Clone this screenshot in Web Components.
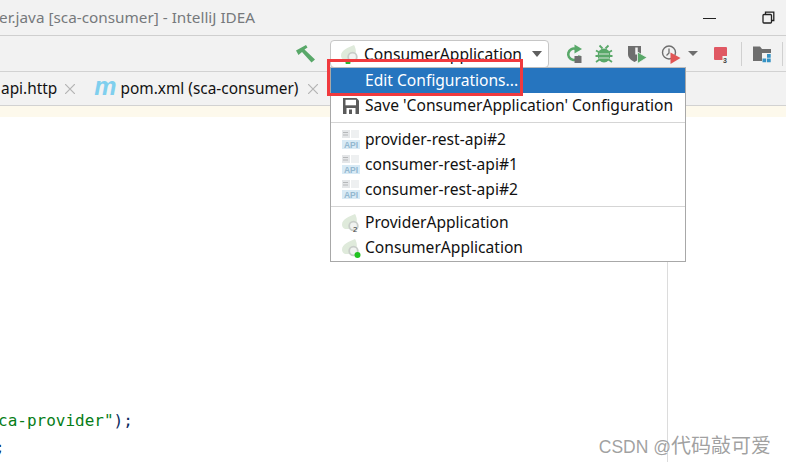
<!DOCTYPE html>
<html><head><meta charset="utf-8">
<style>
html,body{margin:0;padding:0;width:786px;height:462px;overflow:hidden;background:#fff}
body{font-family:"Noto Sans","Open Sans",sans-serif;font-size:15px;color:#111}
</style></head><body>
<ide-window>
  <title-bar>er.java [sca-consumer] - IntelliJ IDEA</title-bar>
  <tool-bar></tool-bar>
  <tab-bar></tab-bar>
  <editor-pane></editor-pane>
  <run-menu>
    <menu-item selected>Edit Configurations...</menu-item>
    <menu-item icon="save">Save 'ConsumerApplication' Configuration</menu-item>
    <menu-sep></menu-sep>
    <menu-item icon="api">provider-rest-api#2</menu-item>
    <menu-item icon="api">consumer-rest-api#1</menu-item>
    <menu-item icon="api">consumer-rest-api#2</menu-item>
    <menu-sep tight></menu-sep>
    <menu-item icon="spring2">ProviderApplication</menu-item>
    <menu-item icon="springrun">ConsumerApplication</menu-item>
  </run-menu>
  <red-mark></red-mark>
  <water-mark></water-mark>
</ide-window>
<script>
const FONT='"Noto Sans","Open Sans",sans-serif';
const spring=(extra='')=>`<svg width="20" height="20" viewBox="0 0 20 20"><path d="M1 11.500C1 6 8 3.500 14 1c2.500 4 2.500 9 0 12l-2 3H4C2 15 1 13.500 1 11.500z" fill="#dfeadb"/><circle cx="12.500" cy="13" r="4.300" fill="#f1f3f1" stroke="#c8cdc9" stroke-width="1.800"/>${extra}</svg>`;
function def(name,html){
  customElements.define(name,class extends HTMLElement{
    connectedCallback(){
      if(this.shadowRoot)return;
      this.attachShadow({mode:'open'}).innerHTML=html;
    }
  });
}
def('ide-window',`<style>:host{display:flex;flex-direction:column;width:786px;height:462px;position:relative;overflow:hidden;background:#fff}</style><slot></slot>`);
def('title-bar',`<style>
:host{display:flex;align-items:center;justify-content:space-between;height:35px;background:#f2f2f2;border-bottom:1px solid #cfcfcf;color:#76797c;font:15.300px ${FONT};flex:none}
.t{margin-left:-1px;white-space:nowrap;padding-bottom:1px}
.w{display:flex;align-items:center;gap:45px;margin-right:11px}
svg{display:block}
</style><span class="t"><slot></slot></span><span class="w">
<svg width="14" height="12" viewBox="0 0 14 12"><rect x="0" y="6" width="13" height="1" fill="#222"/></svg>
<svg width="13" height="13" viewBox="0 0 13 13" fill="none" stroke="#222" stroke-width="1.300"><rect x="1" y="3.500" width="8.500" height="8.500" rx="1"/><path d="M3.500 3V1.200h8.300v8.300H10"/></svg>
</span>`);
def('tool-bar',`<style>
:host{display:flex;align-items:center;height:35px;background:#f2f2f2;border-bottom:1px solid #d2d2d2;flex:none;padding-left:295px}
svg{display:block;flex:none}
.combo{margin-left:15px;width:219px;height:28px;box-sizing:border-box;border:1px solid #c6c6c6;border-radius:4px;background:#fff;display:flex;align-items:center;padding-left:9px;font:15.600px ${FONT};color:#111;margin-top:1px}
.combo span{margin-left:4px;white-space:nowrap;padding-bottom:1px}
.arrow{width:0;height:0;border:5.500px solid transparent;border-top:6px solid #5f5f5f;border-bottom:0;margin-left:auto;margin-right:6px}
.sep{width:1px;height:24px;background:#d0d0d0;flex:none}
.a{width:0;height:0;border:5px solid transparent;border-top:5px solid #6e6e6e;border-bottom:0;margin-left:7px}
</style>
<svg width="20" height="20" viewBox="0 0 20 20"><path d="M1 6.500L11 1l1.500 2.500-3 2L20 15.500 16.500 18.500 7 8l-3.500 3z" fill="#59a869"/></svg>
<div class="combo">${spring('<circle cx="8" cy="18.500" r="2.500" fill="#2fb52f"/>')}<span>ConsumerApplication</span><i class="arrow"></i></div>
<svg style="margin-left:15px" width="20" height="20" viewBox="0 0 20 20"><path d="M15.500 11.500a5.700 5.700 0 1 1-4-6.700" fill="none" stroke="#59a869" stroke-width="2.600"/><path d="M10.500 0.500l7.500 4.500-7.500 4.500z" fill="#59a869"/><rect x="10.500" y="12" width="7" height="7" fill="#6e6e6e"/></svg>
<svg style="margin-left:10px" width="20" height="20" viewBox="0 0 20 20"><g fill="#59a869"><ellipse cx="10" cy="11.500" rx="6.300" ry="7"/></g><path d="M2 6.500l3.500 2M18 6.500l-3.500 2M1.500 12h4M18.500 12h-4M2 18l3.500-2.500M18 18l-3.500-2.500M5.500 1.500l3 3M14.500 1.500l-3 3" stroke="#59a869" stroke-width="1.800" fill="none"/><path d="M5 10h10M5 14h10" stroke="#f2f2f2" stroke-width="1.200" opacity=".85"/></svg>
<svg style="margin-left:13px" width="20" height="20" viewBox="0 0 20 20"><path d="M1 2h13v8c0 4-3 6-6.500 8C4 16 1 14 1 10z" fill="#6e6e6e"/><path d="M9.500 3.500v7" stroke="#f2f2f2" stroke-width="2.500"/><path d="M10.500 8l9.500 5.500-9.500 6z" fill="#59a869" stroke="#f2f2f2" stroke-width=".8"/></svg>
<svg style="margin-left:14px" width="20" height="20" viewBox="0 0 20 20"><circle cx="8" cy="8.500" r="6.500" fill="none" stroke="#6e6e6e" stroke-width="1.400"/><path d="M8 4.500v4.500l-2.500 2.500" fill="none" stroke="#6e6e6e" stroke-width="1.300"/><path d="M9.500 8.500l10 5.500-10 6z" fill="#e05555"/></svg>
<i class="a"></i>
<svg style="margin-left:15px" width="15" height="19" viewBox="0 0 15 19"><rect x="1" y="3" width="13" height="13" rx="1" fill="#e05863"/><rect x="9.500" y="12" width="5.500" height="7" fill="#f2f2f2"/><text x="10" y="19" font-size="7" font-weight="700" font-family="Liberation Sans" fill="#444">3</text></svg>
<div class="sep" style="margin-left:13px"></div>
<svg style="margin-left:10px" width="20" height="20" viewBox="0 0 20 20"><path d="M1 2.500h7l2 2.500h9v12H1z" fill="#6e6e6e"/><rect x="10" y="9" width="10" height="10" fill="#f2f2f2"/><path d="M10.500 14.500h3.700v3.700h-3.700zM15 14.500h3.700v3.700H15zM15 10h3.700v3.700H15z" fill="#3592c4"/></svg>
<div class="sep" style="margin-left:10px"></div>`);
def('tab-bar',`<style>
:host{display:flex;align-items:center;height:33px;background:#f2f2f2;border-bottom:1px solid #d2d2d2;flex:none;font:15.400px ${FONT};color:#111;white-space:nowrap}
svg{display:block;flex:none}
i{font:italic 700 25px/20px "Liberation Sans",sans-serif;color:#7fcfee;margin-top:-6px}
</style>
<span style="margin-left:1px">api.http</span>
<svg style="margin-left:8px" width="10" height="10" viewBox="0 0 10 10" stroke="#b4b4b4" stroke-width="1.200"><path d="M0 0l10 10M10 0L0 10"/></svg>
<i style="margin-left:19px">m</i>
<span style="margin-left:4px">pom.xml (sca-consumer)</span>
<svg style="margin-left:10px" width="10" height="10" viewBox="0 0 10 10" stroke="#b4b4b4" stroke-width="1.200"><path d="M0 0l10 10M10 0L0 10"/></svg>`);
def('editor-pane',`<style>
:host{display:flex;flex-direction:column;flex:1;min-height:0;background:#fff;position:relative}
.strip{height:11px;background:#fdf9ec;flex:none}
.body{flex:1;display:flex;flex-direction:column;justify-content:flex-end;font:16px "DejaVu Sans Mono","Liberation Mono",monospace;line-height:27px;padding-bottom:1px;white-space:pre}
.margin{position:absolute;left:667px;top:11px;bottom:0;width:1px;background:#dcdcdc}
.g{color:#067d17}.p{color:#0a2a5e}
</style><div class="strip"></div><div class="margin"></div><div class="body"><div style="margin-left:-2px"><span class="g">ca-provider"</span><span class="p">);</span></div><div><span class="p" style="margin-left:-5px">;</span></div></div>`);
def('run-menu',`<style>
:host{position:absolute;left:330px;top:67px;width:356px;height:195px;box-sizing:border-box;background:#fff;border:1px solid #a8a8a8;border-top-color:#bcbcbc;display:flex;flex-direction:column;font:15.600px ${FONT};color:#111}
</style><slot></slot>`);
const icons={
 save:`<svg width="16" height="16" viewBox="0 0 16 16" fill="#5b5b5b"><path d="M0 0h13.500l2.500 2.500V16H0z"/><rect x="2.500" y="1.800" width="10.500" height="5.500" fill="#fff"/><rect x="3.500" y="10" width="9" height="6" fill="#fff"/><rect x="6" y="11.500" width="3" height="4.500" fill="#5b5b5b"/></svg>`,
 api:`<svg width="20" height="20" viewBox="0 0 20 20"><rect x="1" y="0" width="8" height="8" fill="#e4e6e8"/><path d="M2 2.500h5M2 5h5" stroke="#b5b7b9"/><rect x="10" y="0" width="8" height="8" fill="#eef0f1"/><rect x="1" y="10" width="18" height="9" fill="#d8eaf5"/><text x="10" y="18" text-anchor="middle" font-family="Liberation Sans" font-weight="700" font-size="8.500" fill="#93b8d0">API</text></svg>`,
 spring2:spring('<text x="12" y="18.500" font-size="7.500" font-family="Liberation Sans" fill="#333">2</text>'),
 springrun:spring('<circle cx="16.500" cy="17" r="3" fill="#22c322"/>')
};
customElements.define('menu-item',class extends HTMLElement{
  connectedCallback(){
    if(this.shadowRoot)return;
    const r=this.attachShadow({mode:'open'});
    const ic=icons[this.getAttribute('icon')]||'';
    const pad=this.getAttribute('icon')==='save'?'padding-left:2px;box-sizing:border-box;':'';
    r.innerHTML=`<style>
:host{display:flex;align-items:center;height:25px;flex:none;white-space:nowrap;padding-left:10px}
:host([selected]){background:#2675bf;color:#fff}
.i{width:24px;height:20px;display:flex;align-items:center;flex:none;${pad}}
.l{padding-bottom:2px}
</style><span class="i">${ic}</span><span class="l"><slot></slot></span>`;
  }
});
def('menu-sep',`<style>:host{display:block;height:1px;background:#d5d5d5;margin:4px 0;flex:none}:host([tight]){margin-bottom:3px}</style>`);
def('red-mark',`<style>:host{position:absolute;left:327px;top:59px;width:196px;height:37px;box-sizing:border-box;border:3px solid #f03a3e;pointer-events:none}</style>`);
def('water-mark',`<style>:host{position:absolute;right:15px;top:430px;font:17.500px "Liberation Sans","Noto Sans CJK SC",sans-serif;color:rgba(130,130,130,.75);white-space:nowrap}
b{font:400 20px "Noto Sans CJK SC",sans-serif}</style>CSDN @<b>代码敲可爱</b>`);
</script>
</body></html>
